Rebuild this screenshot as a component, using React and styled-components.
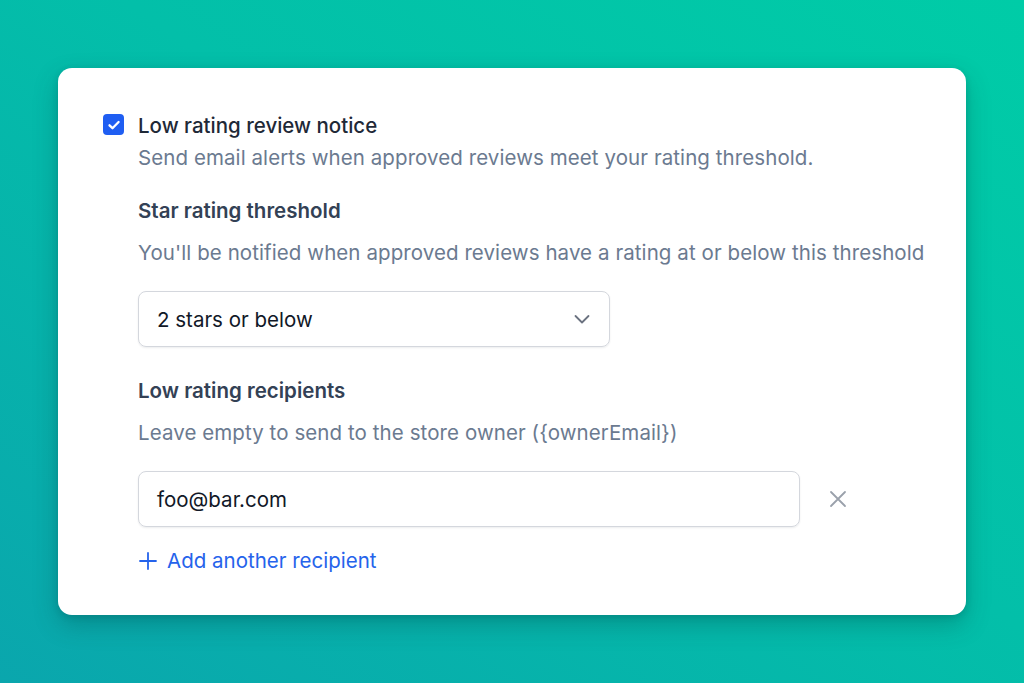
import React from "react";
import styled, { createGlobalStyle } from "styled-components";

const GlobalStyle = createGlobalStyle`
  html, body {
    margin: 0;
    padding: 0;
    height: 100%;
  }
  body {
    font-family: Inter, "Noto Sans", sans-serif;
    -webkit-font-smoothing: antialiased;
  }
  #root {
    height: 100%;
  }
`;

const Page = styled.div`
  width: 1024px;
  height: 683px;
  box-sizing: border-box;
  padding: 68px 58px;
  background: linear-gradient(35deg, #0aa6ad 0%, #03bfa9 55%, #00cca7 100%);
`;

const Card = styled.div`
  background: #fff;
  border-radius: 14px;
  height: 547px;
  box-sizing: border-box;
  padding: 45px 40px 0 45px;
  box-shadow: 0 10px 24px rgba(0, 60, 60, 0.28), 0 2px 6px rgba(0, 60, 60, 0.15);
`;

const OptionRow = styled.div`
  display: flex;
  gap: 14px;
  align-items: flex-start;
`;

const Box = styled.span`
  flex: none;
  width: 21px;
  height: 21px;
  margin-top: 1px;
  border-radius: 4px;
  background: #1f5ef2;
  display: flex;
  align-items: center;
  justify-content: center;
`;

const OptionBody = styled.div`
  display: flex;
  flex-direction: column;
`;

const Title = styled.div`
  font-size: 20.5px;
  font-weight: 500;
  color: #1f2937;
  line-height: 26px;
`;

const Hint = styled.div`
  font-size: 20.5px;
  letter-spacing: 0.08px;
  color: #6b7a90;
  line-height: 26px;
  margin-top: ${(p) => p.$top || 0}px;
`;

const Section = styled.div`
  margin-top: ${(p) => p.$top}px;
`;

const Label = styled.div`
  font-size: 20.5px;
  font-weight: 600;
  color: #334155;
  line-height: 26px;
`;

const Field = styled.div`
  box-sizing: border-box;
  width: ${(p) => p.$width}px;
  height: 56px;
  border: 1px solid #d4d7dd;
  border-radius: 8px;
  box-shadow: 0 1px 2px rgba(15, 23, 42, 0.08);
  display: flex;
  align-items: center;
  justify-content: space-between;
  padding: 0 18px 0 18px;
  font-size: 20.5px;
  color: #111827;
`;

const FieldRow = styled.div`
  display: flex;
  align-items: center;
  gap: 28px;
  margin-top: ${(p) => p.$top}px;
`;

const IconBtn = styled.span`
  display: flex;
  align-items: center;
  color: #9aa1ab;
`;

const AddLink = styled.div`
  display: flex;
  align-items: center;
  gap: 9px;
  margin-top: 21px;
  font-size: 20.5px;
  color: #2563eb;
`;

const Check = () => (
  <svg width="14" height="14" viewBox="0 0 14 14" fill="none">
    <path d="M2.5 7.3l3 2.9L11.6 4" stroke="#fff" strokeWidth="2.3" strokeLinecap="round" strokeLinejoin="round" />
  </svg>
);

const Chevron = () => (
  <svg width="18" height="18" viewBox="0 0 18 18" fill="none">
    <path d="M2.5 6l6.5 6.5L15.5 6" stroke="#6b7280" strokeWidth="1.8" strokeLinecap="round" strokeLinejoin="round" />
  </svg>
);

const Cross = () => (
  <svg width="20" height="20" viewBox="0 0 20 20" fill="none">
    <path d="M3 3l14 14M17 3L3 17" stroke="currentColor" strokeWidth="1.8" strokeLinecap="round" />
  </svg>
);

const Plus = () => (
  <svg width="20" height="20" viewBox="0 0 20 20" fill="none">
    <path d="M10 2v16M2 10h16" stroke="currentColor" strokeWidth="1.8" strokeLinecap="round" />
  </svg>
);

export default function App() {
  return (
    <>
      <GlobalStyle />
      <Page>
        <Card>
          <OptionRow>
            <Box>
              <Check />
            </Box>
            <OptionBody>
              <Title>Low rating review notice</Title>
              <Hint $top={6}>Send email alerts when approved reviews meet your rating threshold.</Hint>

              <Section $top={27}>
                <Label>Star rating threshold</Label>
                <Hint $top={16}>You'll be notified when approved reviews have a rating at or below this threshold</Hint>
                <FieldRow $top={25}>
                  <Field $width={472}>
                    <span>2 stars or below</span>
                    <Chevron />
                  </Field>
                </FieldRow>
              </Section>

              <Section $top={31}>
                <Label>Low rating recipients</Label>
                <Hint $top={16}>Leave empty to send to the store owner ({"{ownerEmail}"})</Hint>
                <FieldRow $top={25}>
                  <Field $width={662}>
                    <span>foo@bar.com</span>
                  </Field>
                  <IconBtn>
                    <Cross />
                  </IconBtn>
                </FieldRow>
                <AddLink>
                  <Plus />
                  <span>Add another recipient</span>
                </AddLink>
              </Section>
            </OptionBody>
          </OptionRow>
        </Card>
      </Page>
    </>
  );
}
